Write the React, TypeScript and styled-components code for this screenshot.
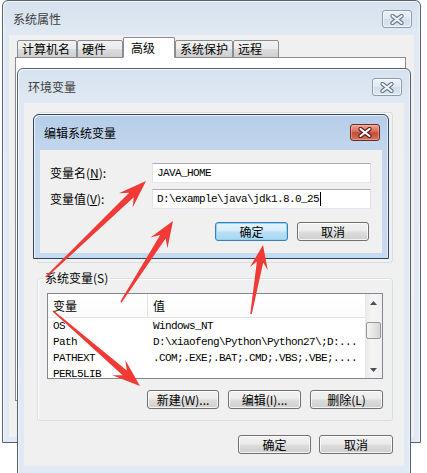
import React from "react";
import styled, { createGlobalStyle, css } from "styled-components";

const GlobalStyle = createGlobalStyle`
  html, body { margin: 0; padding: 0; }
  body {
    background: #ffffff;
    font-family: "Noto Sans CJK SC", "Liberation Sans", sans-serif;
    font-size: 12px;
    color: #000;
  }
  * { box-sizing: border-box; }
`;

const MONO = `"Liberation Mono", "DejaVu Sans Mono", monospace`;

const Desktop = styled.div`
  position: relative;
  width: 427px;
  height: 473px;
  overflow: hidden;
  background: #ffffff;
`;

/* ---------- window chrome ---------- */

const Win = styled.section<{
  $active?: boolean;
  $x: number;
  $y: number;
  $w: number;
  $h: number;
  $pb: number;
  $z: number;
}>`
  position: absolute;
  left: ${(p) => p.$x}px;
  top: ${(p) => p.$y}px;
  width: ${(p) => p.$w}px;
  height: ${(p) => p.$h}px;
  z-index: ${(p) => p.$z};
  display: flex;
  flex-direction: column;
  padding: 0 6px ${(p) => p.$pb}px;
  border: 1px solid ${(p) => (p.$active ? "#33445a" : "#56616d")};
  border-radius: 6px 6px 0 0;
  background: ${(p) =>
    p.$active
      ? "linear-gradient(#b5cde8 0px, #c1d6ed 30px, #c7dbf0 100%)"
      : "linear-gradient(#d6e2ef 0px, #e0e9f3 34px, #e1eaf4 100%)"};
  box-shadow: inset 1px 1px 0 rgba(255, 255, 255, 0.7),
    inset -1px 0 0 rgba(255, 255, 255, 0.5);
`;

const TitleBar = styled.header<{ $h: number }>`
  height: ${(p) => p.$h}px;
  flex: none;
  display: flex;
  align-items: flex-start;
  padding: 9px 2px 0 4px;
`;

const Title = styled.h1<{ $active?: boolean }>`
  margin: 1px 0 0;
  font-size: 12px;
  font-weight: normal;
  line-height: 16px;
  color: ${(p) => (p.$active ? "#000" : "#3d3d3d")};
`;

const CloseButton = styled.button<{ $active?: boolean; $h: number }>`
  margin-left: auto;
  width: 30px;
  height: ${(p) => p.$h}px;
  padding: 0;
  border-radius: 3px;
  display: flex;
  align-items: center;
  justify-content: center;
  ${(p) =>
    p.$active
      ? css`
          border: 1px solid #6a2a22;
          background: linear-gradient(#eaa896 0%, #d56a53 45%, #c34c37 52%, #d7745c 100%);
          box-shadow: inset 0 0 0 1px rgba(255, 200, 190, 0.45);
        `
      : css`
          border: 1px solid #8b9bb0;
          background: linear-gradient(#edf2f8 0%, #dfe7f1 48%, #d3deea 52%, #dde6f0 100%);
          box-shadow: inset 0 0 0 1px rgba(255, 255, 255, 0.6);
        `}
`;

const CloseGlyph = ({ active }: { active?: boolean }) => (
  <svg width="14" height="11" viewBox="0 0 14 11" aria-hidden="true">
    <path
      d="M2.5 2 L11.5 9 M11.5 2 L2.5 9"
      stroke={active ? "#5a1a12" : "#66778c"}
      strokeWidth="4.2"
      strokeLinecap="round"
      fill="none"
    />
    <path
      d="M2.5 2 L11.5 9 M11.5 2 L2.5 9"
      stroke={active ? "#ffffff" : "#eef3f8"}
      strokeWidth="2.2"
      strokeLinecap="round"
      fill="none"
    />
  </svg>
);

const Client = styled.div`
  flex: 1;
  min-height: 0;
  background: #f0f0f0;
  display: flex;
  flex-direction: column;
`;

/* ---------- 系统属性 tabs ---------- */

const TabStrip = styled.div`
  display: flex;
  align-items: flex-end;
  margin: 2px 0 0 8px;
  height: 21px;
  position: relative;
  z-index: 1;
`;

const Tab = styled.div<{ $w: number; $selected?: boolean }>`
  width: ${(p) => p.$w}px;
  height: ${(p) => (p.$selected ? 21 : 18)}px;
  display: flex;
  align-items: center;
  padding-left: ${(p) => (p.$selected ? 7 : 4)}px;
  line-height: 16px;
  white-space: nowrap;
  border: 1px solid #898c95;
  border-bottom-color: ${(p) => (p.$selected ? "#ffffff" : "#898c95")};
  border-radius: 2px 2px 0 0;
  background: ${(p) =>
    p.$selected ? "#ffffff" : "linear-gradient(#f2f2f2 0%, #ebebeb 50%, #dddddd 51%, #cfcfcf 100%)"};
`;

const TabPanel = styled.div`
  margin: -1px 8px 0 6px;
  height: 344px;
  background: #ffffff;
  border: 1px solid #898c95;
`;

/* ---------- shared controls ---------- */

const Button = styled.button<{ $default?: boolean; $w?: number }>`
  width: ${(p) => p.$w ?? 73}px;
  height: 19px;
  padding: 0;
  font-family: inherit;
  font-size: 12px;
  line-height: 15px;
  color: #000;
  border-radius: 3px;
  white-space: nowrap;
  ${(p) =>
    p.$default
      ? css`
          border: 1px solid #3c7fb1;
          background: linear-gradient(#e5f4fc 0%, #d3ecfa 48%, #b9e0f6 52%, #a9d6f2 100%);
          box-shadow: inset 0 0 0 1px #8fd3f5;
        `
      : css`
          border: 1px solid #707070;
          background: linear-gradient(#f2f2f2 0%, #ebebeb 48%, #dddddd 52%, #cfcfcf 100%);
          box-shadow: inset 0 0 0 1px rgba(255, 255, 255, 0.75);
        `}
`;

const ButtonRow = styled.div<{ $gap: number; $mt: number; $pr?: number }>`
  display: flex;
  justify-content: flex-end;
  gap: ${(p) => p.$gap}px;
  margin-top: ${(p) => p.$mt}px;
  padding-right: ${(p) => p.$pr ?? 0}px;
`;

/* ---------- 环境变量 ---------- */

const EnvBody = styled(Client)`
  padding: 9px 11px 0 13px;
`;

const UserGroup = styled.div`
  height: 151px;
  border: 1px solid #d5dfe5;
  border-radius: 3px;
  box-shadow: inset 1px 1px 0 #ffffff;
`;

const Group = styled.fieldset`
  margin: 7px 0 0 0;
  padding: 7px 9px 11px;
  min-width: 0;
  height: 151px;
  border: 1px solid #d5dfe5;
  border-radius: 3px;
  box-shadow: inset 1px 1px 0 #ffffff;
  display: flex;
  flex-direction: column;
`;

const Legend = styled.legend`
  padding: 0 2px;
  margin-left: -4px;
  font-size: 12px;
  line-height: 16px;
`;

const ListBox = styled.div`
  height: 86px;
  border: 1px solid #828790;
  background: #ffffff;
  display: flex;
  overflow: hidden;
`;

const ListArea = styled.div`
  flex: 1;
  min-width: 0;
  display: flex;
  flex-direction: column;
`;

const HeaderRow = styled.div`
  height: 24px;
  flex: none;
  display: grid;
  grid-template-columns: 100px 1fr;
  border-bottom: 1px solid #e5e5e5;
  background: linear-gradient(#ffffff, #fbfbfb);
`;

const HeaderCell = styled.div<{ $divider?: boolean }>`
  padding-left: 5px;
  line-height: 23px;
  border-right: ${(p) => (p.$divider ? "1px solid #e2e2e2" : "none")};
`;

const Row = styled.div`
  height: 16px;
  flex: none;
  display: grid;
  grid-template-columns: 100px 1fr;
  font-family: ${MONO};
  font-size: 11px;
  letter-spacing: -0.6px;
  line-height: 16px;
  white-space: nowrap;
  overflow: hidden;
`;

const Cell = styled.div`
  padding-left: 5px;
  overflow: hidden;
`;

const ScrollBar = styled.div`
  width: 17px;
  flex: none;
  display: flex;
  flex-direction: column;
  background: linear-gradient(90deg, #e8e8e8, #f5f5f5 40%, #f0f0f0);
`;

const ScrollArrow = styled.div<{ $down?: boolean }>`
  height: 17px;
  flex: none;
  display: flex;
  align-items: center;
  justify-content: center;
  margin-top: ${(p) => (p.$down ? "auto" : "0")};
`;

const Thumb = styled.div`
  margin: 11px 1px 0 1px;
  height: 17px;
  border: 1px solid #979797;
  border-radius: 2px;
  background: linear-gradient(90deg, #f4f4f4, #e6e6e6 50%, #d6d6d6);
`;

const Tri = ({ down }: { down?: boolean }) => (
  <svg width="7" height="4" viewBox="0 0 7 4" aria-hidden="true">
    <path d={down ? "M0 0 H7 L3.5 4 Z" : "M0 4 H7 L3.5 0 Z"} fill="#4d4d4d" />
  </svg>
);

/* ---------- 编辑系统变量 ---------- */

const EditBody = styled(Client)`
  padding: 13px 11px 0 10px;
`;

const FormGrid = styled.div`
  display: grid;
  grid-template-columns: 102px 219px;
  grid-auto-rows: 20px;
  row-gap: 6px;
  align-items: center;
`;

const FieldLabel = styled.label`
  line-height: 20px;
  white-space: nowrap;
  u {
    text-decoration: underline;
    text-underline-offset: 1px;
  }
`;

const TextBox = styled.div`
  height: 20px;
  border: 1px solid;
  border-color: #abadb3 #dbdfe6 #e3e9ef #e2e3ea;
  background: #ffffff;
  padding-left: 4px;
  display: flex;
  align-items: center;
  font-family: ${MONO};
  font-size: 11px;
  letter-spacing: -0.6px;
  white-space: nowrap;
`;

const Caret = styled.span`
  display: inline-block;
  width: 1px;
  height: 14px;
  margin-left: 1px;
  background: #000;
`;

/* ---------- red annotation arrows ---------- */

const Overlay = styled.svg`
  position: absolute;
  left: 0;
  top: 0;
  z-index: 10;
  pointer-events: none;
`;

type Pt = [number, number];

const arrowPolygon = (tail: Pt, tip: Pt, len: number, half: number): string => {
  const dx = tip[0] - tail[0];
  const dy = tip[1] - tail[1];
  const d = Math.hypot(dx, dy);
  const ux = dx / d;
  const uy = dy / d;
  const nx = -uy;
  const ny = ux;
  const wing: Pt = [tip[0] - ux * len, tip[1] - uy * len];
  const neck: Pt = [tip[0] - ux * len * 0.72, tip[1] - uy * len * 0.72];
  const s0 = 0.8;
  const s1 = 3.2;
  const pts: Pt[] = [
    [tail[0] + nx * s0, tail[1] + ny * s0],
    [neck[0] + nx * s1, neck[1] + ny * s1],
    [wing[0] + nx * half, wing[1] + ny * half],
    tip,
    [wing[0] - nx * half, wing[1] - ny * half],
    [neck[0] - nx * s1, neck[1] - ny * s1],
    [tail[0] - nx * s0, tail[1] - ny * s0],
  ];
  return pts.map((p) => `${p[0].toFixed(1)},${p[1].toFixed(1)}`).join(" ");
};

const ARROWS: { from: Pt; to: Pt; len: number; half: number }[] = [
  { from: [46, 277], to: [146, 181], len: 28, half: 10 },
  { from: [121, 302], to: [173, 221], len: 26, half: 10 },
  { from: [251, 314], to: [263, 245], len: 24, half: 9 },
  { from: [53, 311], to: [140, 386], len: 28, half: 10 },
];

/* ---------- data ---------- */

const TABS = [
  { label: "计算机名", w: 60 },
  { label: "硬件", w: 46 },
  { label: "高级", w: 52, sel: true },
  { label: "系统保护", w: 58 },
  { label: "远程", w: 46 },
];

const SYS_VARS = [
  ["OS", "Windows_NT"],
  ["Path", "D:\\xiaofeng\\Python\\Python27\\;D:..."],
  ["PATHEXT", ".COM;.EXE;.BAT;.CMD;.VBS;.VBE;...."],
  ["PERL5LIB", ""],
];

export default function App() {
  return (
    <>
      <GlobalStyle />
      <Desktop>
        {/* 系统属性 */}
        <Win $x={2} $y={0} $w={419} $h={443} $pb={5} $z={1}>
          <TitleBar $h={34}>
            <Title>系统属性</Title>
            <CloseButton $h={18} aria-label="关闭">
              <CloseGlyph />
            </CloseButton>
          </TitleBar>
          <Client>
            <TabStrip>
              {TABS.map((t) => (
                <Tab key={t.label} $w={t.w} $selected={t.sel}>
                  {t.label}
                </Tab>
              ))}
            </TabStrip>
            <TabPanel />
          </Client>
        </Win>

        {/* 环境变量 */}
        <Win $x={17} $y={68} $w={394} $h={407} $pb={8} $z={2}>
          <TitleBar $h={34}>
            <Title>环境变量</Title>
            <CloseButton $h={18} aria-label="关闭">
              <CloseGlyph />
            </CloseButton>
          </TitleBar>
          <EnvBody>
            <UserGroup />
            <Group>
              <Legend>系统变量(S)</Legend>
              <ListBox>
                <ListArea>
                  <HeaderRow>
                    <HeaderCell $divider>变量</HeaderCell>
                    <HeaderCell>值</HeaderCell>
                  </HeaderRow>
                  {SYS_VARS.map(([k, v]) => (
                    <Row key={k}>
                      <Cell>{k}</Cell>
                      <Cell>{v}</Cell>
                    </Row>
                  ))}
                </ListArea>
                <ScrollBar>
                  <ScrollArrow>
                    <Tri />
                  </ScrollArrow>
                  <Thumb />
                  <ScrollArrow $down>
                    <Tri down />
                  </ScrollArrow>
                </ScrollBar>
              </ListBox>
              <ButtonRow $gap={9} $mt={11}>
                <Button $w={72}>新建(W)...</Button>
                <Button $w={73}>编辑(I)...</Button>
                <Button $w={73}>删除(L)</Button>
              </ButtonRow>
            </Group>
            <ButtonRow $gap={8} $mt={14}>
              <Button $w={73}>确定</Button>
              <Button $w={74}>取消</Button>
            </ButtonRow>
          </EnvBody>
        </Win>

        {/* 编辑系统变量 */}
        <Win $active $x={33} $y={114} $w={356} $h={145} $pb={5} $z={3}>
          <TitleBar $h={35}>
            <Title $active>编辑系统变量</Title>
            <CloseButton $active $h={17} aria-label="关闭">
              <CloseGlyph active />
            </CloseButton>
          </TitleBar>
          <EditBody>
            <FormGrid>
              <FieldLabel>
                变量名(<u>N</u>):
              </FieldLabel>
              <TextBox>JAVA_HOME</TextBox>
              <FieldLabel>
                变量值(<u>V</u>):
              </FieldLabel>
              <TextBox>
                D:\example\java\jdk1.8.0_25
                <Caret />
              </TextBox>
            </FormGrid>
            <ButtonRow $gap={9} $mt={13} $pr={2}>
              <Button $default $w={73}>
                确定
              </Button>
              <Button $w={72}>取消</Button>
            </ButtonRow>
          </EditBody>
        </Win>

        <Overlay width="427" height="473" viewBox="0 0 427 473" aria-hidden="true">
          {ARROWS.map((a, i) => (
            <polygon key={i} points={arrowPolygon(a.from, a.to, a.len, a.half)} fill="#f03a36" />
          ))}
        </Overlay>
      </Desktop>
    </>
  );
}
